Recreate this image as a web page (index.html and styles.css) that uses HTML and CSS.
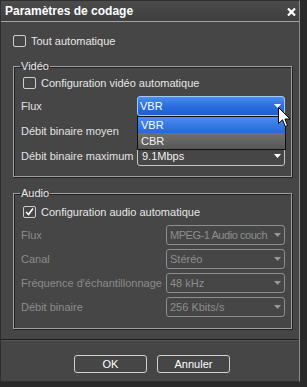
FILE: index.html
```html
<!DOCTYPE html>
<html>
<head>
  <meta charset="UTF-8" />
  <link rel="stylesheet" href="styles.css">
</head>
<body>
  <div class="screen">
    <div class="dialog">
      <div class="titlebar">
        <span class="title">Paramètres de codage</span>
        <svg class="close" width="9" height="8" viewBox="0 0 9 8">
          <path d="M1 0.5 L8 7.5 M8 0.5 L1 7.5" stroke="#fff" stroke-width="2.2" />
        </svg>
      </div>

      <div class="content">
        <div class="check">
          <span class="box"></span>
          <span>Tout automatique</span>
        </div>

        <fieldset class="group video">
          <legend>Vidéo</legend>
          <div class="check">
            <span class="box"></span>
            <span>Configuration vidéo automatique</span>
          </div>
          <div class="rows">
            <div class="row">
              <span class="label">Flux</span>
              <div class="combo-wrap">
                <div class="combo active">
                  <span>VBR</span>
                  <svg class="arrow" width="7" height="4" viewBox="0 0 7 4"><polygon points="0,0 7,0 3.5,4" fill="#fff" /></svg>
                </div>
                <div class="dropdown">
                  <div class="option selected">VBR</div>
                  <div class="option">CBR</div>
                </div>
              </div>
            </div>
            <div class="row">
              <span class="label">Débit binaire moyen</span>
              <!-- hidden behind the open list -->
              <div class="combo"></div>
            </div>
            <div class="row">
              <span class="label">Débit binaire maximum</span>
              <div class="combo">
                <span>9.1Mbps</span>
                <svg class="arrow" width="7" height="4" viewBox="0 0 7 4"><polygon points="0,0 7,0 3.5,4" fill="#fff" /></svg>
              </div>
            </div>
          </div>
        </fieldset>

        <fieldset class="group audio">
          <legend>Audio</legend>
          <div class="check">
            <span class="box">
              <svg width="11" height="10" viewBox="0 0 11 10"><polyline points="2,5 4.5,7.5 9,1.5" fill="none" stroke="#fff" stroke-width="1.6" /></svg>
            </span>
            <span>Configuration audio automatique</span>
          </div>
          <div class="rows">
            <div class="row">
              <span class="label off">Flux</span>
              <div class="combo off">
                <span class="value tight">MPEG-1 Audio couch</span>
                <svg class="arrow" width="7" height="4" viewBox="0 0 7 4"><polygon points="0,0 7,0 3.5,4" fill="#999" /></svg>
              </div>
            </div>
            <div class="row">
              <span class="label off">Canal</span>
              <div class="combo off">
                <span class="value">Stéréo</span>
                <svg class="arrow" width="7" height="4" viewBox="0 0 7 4"><polygon points="0,0 7,0 3.5,4" fill="#999" /></svg>
              </div>
            </div>
            <div class="row">
              <span class="label off">Fréquence d'échantillonnage</span>
              <div class="combo off">
                <span class="value">48 kHz</span>
                <svg class="arrow" width="7" height="4" viewBox="0 0 7 4"><polygon points="0,0 7,0 3.5,4" fill="#999" /></svg>
              </div>
            </div>
            <div class="row">
              <span class="label off">Débit binaire</span>
              <div class="combo off">
                <span class="value">256 Kbits/s</span>
                <svg class="arrow" width="7" height="4" viewBox="0 0 7 4"><polygon points="0,0 7,0 3.5,4" fill="#999" /></svg>
              </div>
            </div>
          </div>
        </fieldset>
      </div>

      <div class="footer">
        <button class="btn">OK</button>
        <button class="btn">Annuler</button>
      </div>

      <!-- mouse pointer over the open list -->
      <svg class="pointer" width="13" height="21" viewBox="0 0 13 21">
        <path d="M0.5 0.5 L0.5 16.5 L4.5 12.8 L7.3 19.5 L9.6 18.5 L6.9 12 L12 12 Z" fill="#fff" stroke="#000" stroke-width="1" />
      </svg>
    </div>
  </div>
</body>
</html>
```

FILE: styles.css
```css
* { box-sizing: border-box; }
body {
  margin: 0;
  background: #2a2a2a;
  font-family: "Liberation Sans", Arial, sans-serif;
  font-size: 11px;
  color: #e6e6e6;
}
.screen {
  width: 307px;
  height: 387px;
  background: #2a2a2a;
}
.dialog {
  position: relative;
  width: 300px;
  height: 382px;
  background: #464646;
  border: 1px solid #2e2e2e;
  border-right-color: #8a8a8a;
  display: flex;
  flex-direction: column;
}
.titlebar {
  height: 21px;
  border-bottom: 1px solid #a3a3a3;
  background: linear-gradient(#4b4b4b, #3f3f3f);
  display: flex;
  align-items: center;
  justify-content: space-between;
  padding: 0 3px 0 4px;
  color: #fff;
  font-size: 12px;
  font-weight: bold;
}
.close {
  display: block;
  margin-top: 1px;
}
.content {
  padding: 13px 7px 0 12px;
}
.check {
  display: flex;
  align-items: center;
  gap: 5px;
  height: 12px;
  white-space: nowrap;
}
.box {
  width: 13px;
  height: 12px;
  border: 1px solid #cfcfcf;
  border-radius: 2px;
  display: flex;
  align-items: center;
  justify-content: center;
  flex-shrink: 0;
}
.box svg { display: block; }
.group {
  margin: 13px 0 0 0;
  padding: 4px 6px 10px 7px;
  border: 1px solid #a0a0a0;
  box-shadow: 1px 1px 0 #222, inset 1px 1px 0 #222;
  min-width: 0;
}
.group legend {
  padding: 0 1px;
  margin-left: -1px;
  line-height: 13px;
  color: #e6e6e6;
}
.group .check {
  margin-left: 2px;
}
.audio {
  margin-top: 10px;
  padding-top: 6px;
  padding-bottom: 11px;
}
.rows {
  display: flex;
  flex-direction: column;
  gap: 5px;
  margin-top: 7px;
}
.audio .rows {
  gap: 4px;
}
.row {
  display: flex;
  align-items: center;
  justify-content: space-between;
  height: 20px;
}
.label {
  color: #e2e2e2;
  white-space: nowrap;
}
.label.off { color: #8c8c8c; }
.combo-wrap {
  position: relative;
  flex-shrink: 0;
}
.combo {
  flex-shrink: 0;
  width: 148px;
  height: 20px;
  border: 1px solid #c4c4c4;
  border-radius: 3px;
  display: flex;
  align-items: center;
  justify-content: space-between;
  padding: 0 3px 0 4px;
  color: #f0f0f0;
  white-space: nowrap;
}
.combo .value.tight {
  letter-spacing: -0.45px;
}
.combo .arrow {
  display: block;
  flex-shrink: 0;
  margin-left: 2px;
}
.combo.active {
  background: linear-gradient(#4a8ef0, #2a6ee0 50%, #1f5fd2);
  border-color: #a8c6f2;
  color: #fff;
  padding-left: 2px;
}
.combo.off {
  width: 119px;
  border-color: #8e8e8e;
  color: #8e8e8e;
  padding-left: 3px;
}
.dropdown {
  position: absolute;
  top: 100%;
  left: 0;
  width: 149px;
  border: 1px solid #111;
  background: #5c5c5c;
  z-index: 2;
}
.option {
  height: 16px;
  line-height: 16px;
  padding-left: 3px;
  color: #f2f2f2;
  background: linear-gradient(#707070, #575757);
}
.option.selected {
  background: linear-gradient(#4a8ef0, #2566da);
  color: #fff;
}
.footer {
  margin-top: 10px;
  border-top: 1px solid #1c1c1c;
  box-shadow: inset 0 1px 0 #555;
  padding: 15px 0 0 4px;
  display: flex;
  justify-content: center;
  gap: 10px;
}
.btn {
  width: 73px;
  height: 18px;
  border: 1px solid #d2d2d2;
  border-radius: 3px;
  background: #464646;
  color: #fff;
  font-family: "Liberation Sans", Arial, sans-serif;
  font-size: 11px;
  padding: 0;
}
.pointer {
  position: absolute;
  left: 277px;
  top: 106px;
  z-index: 3;
}
```
